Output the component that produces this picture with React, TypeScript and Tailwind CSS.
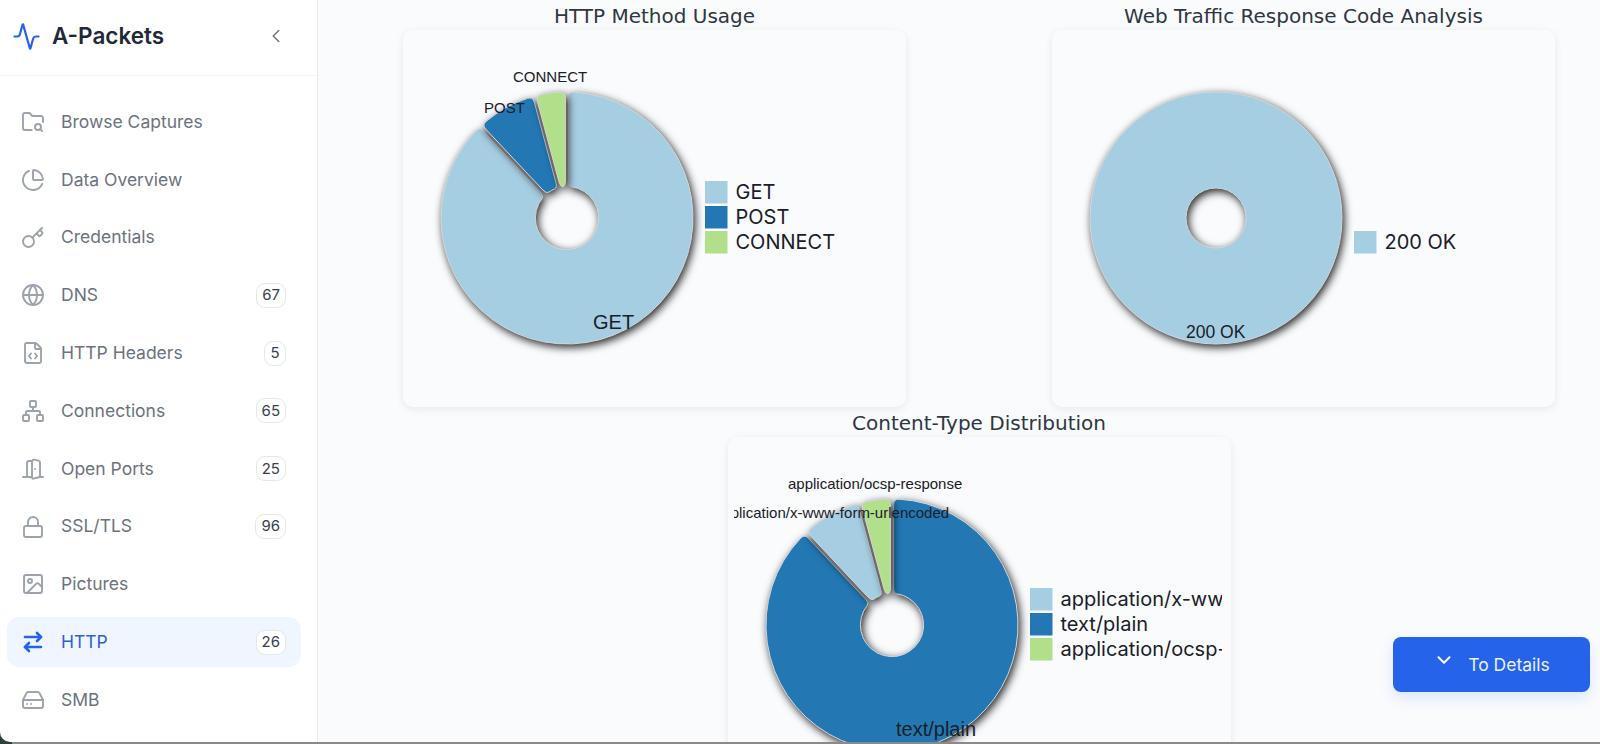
import { Activity, ArrowRightLeft, ChevronDown, ChevronLeft, DoorOpen, FileCode, FolderSearch, Globe, HardDrive, Image, Key, Lock, Network, PieChart } from "lucide-react";

const navItems = [
  { label: "Browse Captures", icon: FolderSearch },
  { label: "Data Overview", icon: PieChart },
  { label: "Credentials", icon: Key },
  { label: "DNS", icon: Globe, count: 67 },
  { label: "HTTP Headers", icon: FileCode, count: 5 },
  { label: "Connections", icon: Network, count: 65 },
  { label: "Open Ports", icon: DoorOpen, count: 25 },
  { label: "SSL/TLS", icon: Lock, count: 96 },
  { label: "Pictures", icon: Image },
  { label: "HTTP", icon: ArrowRightLeft, count: 26, active: true },
  { label: "SMB", icon: HardDrive },
];

const LIGHT = "#a6cee3";
const BLUE = "#2378b4";
const GREEN = "#b2df8a";

const CX = 158;
const CY = 188;
const R = 126;
const R0 = 30;

function pt(r: number, deg: number) {
  const a = (deg * Math.PI) / 180;
  return `${(CX + r * Math.sin(a)).toFixed(2)} ${(CY - r * Math.cos(a)).toFixed(2)}`;
}

// annular sector with rounded corners and a gap of constant width along its sides,
// angles clockwise from 12 o'clock
function sector(from: number, to: number, pad = 1.6, cr = 5.5) {
  const toDeg = 180 / Math.PI;
  const off = (r: number) => Math.asin(pad / r) * toDeg;
  const dO = (cr / R) * toDeg;
  const dI = (cr / R0) * toDeg * 0.5;
  const large = to - from > 180 ? 1 : 0;
  const rIn = R0 + pad;
  return [
    `M ${pt(R - cr, from + off(R - cr))}`,
    `Q ${pt(R, from + off(R))} ${pt(R, from + off(R) + dO)}`,
    `A ${R} ${R} 0 ${large} 1 ${pt(R, to - off(R) - dO)}`,
    `Q ${pt(R, to - off(R))} ${pt(R - cr, to - off(R - cr))}`,
    `L ${pt(rIn + cr, to - off(rIn + cr))}`,
    `Q ${pt(rIn, to - off(rIn))} ${pt(rIn, to - off(rIn) - dI)}`,
    `A ${rIn} ${rIn} 0 ${large} 0 ${pt(rIn, from + off(rIn) + dI)}`,
    `Q ${pt(rIn, from + off(rIn))} ${pt(rIn + cr, from + off(rIn + cr))}`,
    "Z",
  ].join(" ");
}

const ring = `M ${CX - R} ${CY} A ${R} ${R} 0 1 1 ${CX + R} ${CY} A ${R} ${R} 0 1 1 ${CX - R} ${CY} Z M ${CX - R0} ${CY} A ${R0} ${R0} 0 1 0 ${CX + R0} ${CY} A ${R0} ${R0} 0 1 0 ${CX - R0} ${CY} Z`;

interface Label {
  text: string;
  x: number;
  y: number;
  size: number;
}

interface ChartProps {
  slices: { d: string; fill: string }[];
  labels: Label[];
  legend: { name: string; fill: string }[];
}

function Chart({ slices, labels, legend }: ChartProps) {
  // legend rows are anchored to the bottom row
  const firstRow = 3 - legend.length;
  return (
    <svg width={488} height={377} viewBox="0 0 488 377" className="block overflow-hidden">
      {slices.map((s, i) => (
        <path
          key={i}
          d={s.d}
          fill={s.fill}
          fillRule="evenodd"
          stroke="#d4d6d8"
          strokeWidth={1}
          className="drop-shadow-[2px_3px_4px_rgba(0,0,0,0.85)]"
        />
      ))}
      {labels.map((l) => (
        <text key={l.text} x={l.x} y={l.y} fontSize={l.size} fontFamily="'Liberation Sans', Arial, sans-serif" fill="#1a2027">
          {l.text}
        </text>
      ))}
      {legend.map((item, i) => {
        const y = 151 + (i + firstRow) * 25;
        return (
          <g key={item.name}>
            <rect x={296} y={y} width={22.5} height={22.5} fill={item.fill} />
            <text x={326.5} y={y + 18} fontSize={20} fontFamily="Inter, sans-serif" fill="#1a2027">
              {item.name}
            </text>
          </g>
        );
      })}
    </svg>
  );
}

function ChartCard({ title, children, className = "" }: { title: string; children: React.ReactNode; className?: string }) {
  return (
    <div className={`w-[503px] ${className}`}>
      <h3 className="h-[20px] mb-[5px] -mx-10 pt-[1px] text-center text-[20px] leading-[20px] text-[#2f3742] font-['DejaVu_Sans',sans-serif]">
        {title}
      </h3>
      <div className="h-[377px] px-[6px] rounded-[10px] bg-[#fafbfd] shadow-[0_2px_8px_rgba(0,0,0,0.08)]">
        {children}
      </div>
    </div>
  );
}

export default function App() {
  return (
    <div className="relative h-[744px] w-[1600px] overflow-hidden bg-[#8a8a8a] font-['Inter',sans-serif]">
      <div className="absolute left-0 bottom-0 w-[12px] h-[12px] bg-[#2f3f3a]" />

      <div className="relative flex h-[742px]">
        {/* Sidebar */}
        <aside className="w-[318px] shrink-0 rounded-bl-[10px] bg-white border-r border-[#e9ebee]">
          <div className="h-[76px] pb-[3px] flex items-center pl-[12px] pr-[30px] border-b border-[#f2f3f5]">
            <Activity size={29} strokeWidth={1.8} className="text-[#2563eb] shrink-0" />
            <span className="ml-[11px] text-[22.5px] font-semibold text-[#1f2937]">A-Packets</span>
            <ChevronLeft size={22} strokeWidth={1.6} className="ml-auto text-[#6b7280]" />
          </div>
          <nav className="pt-[21px] pl-[7px] pr-[16px] flex flex-col gap-[7.8px]">
            {navItems.map((item) => {
              const Icon = item.icon;
              return (
                <div
                  key={item.label}
                  className={`h-[50px] flex items-center pl-[14px] pr-[15px] rounded-[12px] text-[17.5px] ${
                    item.active ? "bg-[#eff6ff] text-[#2f5fd8]" : "text-[#6b7280]"
                  }`}
                >
                  <Icon
                    size={24}
                    strokeWidth={item.active ? 2.6 : 1.9}
                    className={item.active ? "text-[#2563eb] shrink-0" : "text-[#9ca3af] shrink-0"}
                  />
                  <span className="ml-[16px]">{item.label}</span>
                  {item.count !== undefined && (
                    <span className="ml-auto h-[25px] min-w-[22px] px-[5px] flex items-center justify-center rounded-[9px] border border-[#e5e7eb] bg-white text-[15px] text-[#374151]">
                      {item.count}
                    </span>
                  )}
                </div>
              );
            })}
          </nav>
        </aside>

        {/* Main */}
        <main className="flex-1 overflow-hidden bg-[#fafbfd] pt-[5px] pl-[85px]">
          <div className="w-[1152px] grid grid-cols-[503px_503px] justify-between gap-y-[5px]">
            <ChartCard title="HTTP Method Usage">
              <Chart
                slices={[
                  { d: sector(0, 316.8), fill: LIGHT },
                  { d: sector(316.8, 345), fill: BLUE },
                  { d: sector(345, 360), fill: GREEN },
                ]}
                labels={[
                  { text: "CONNECT", x: 104, y: 52, size: 15 },
                  { text: "POST", x: 75, y: 83, size: 15 },
                  { text: "GET", x: 184, y: 299, size: 20 },
                ]}
                legend={[
                  { name: "GET", fill: LIGHT },
                  { name: "POST", fill: BLUE },
                  { name: "CONNECT", fill: GREEN },
                ]}
              />
            </ChartCard>
            <ChartCard title="Web Traffic Response Code Analysis">
              <Chart
                slices={[{ d: ring, fill: LIGHT }]}
                labels={[{ text: "200 OK", x: 128, y: 308, size: 17.5 }]}
                legend={[{ name: "200 OK", fill: LIGHT }]}
              />
            </ChartCard>
            <ChartCard title="Content-Type Distribution" className="col-span-2 justify-self-center">
              <Chart
                slices={[
                  { d: sector(0, 316.8), fill: BLUE },
                  { d: sector(316.8, 345), fill: LIGHT },
                  { d: sector(345, 360), fill: GREEN },
                ]}
                labels={[
                  { text: "application/ocsp-response", x: 54, y: 52, size: 15 },
                  { text: "application/x-www-form-urlencoded", x: -20, y: 81, size: 15 },
                  { text: "text/plain", x: 162, y: 299, size: 20 },
                ]}
                legend={[
                  { name: "application/x-www-form-urlencoded", fill: LIGHT },
                  { name: "text/plain", fill: BLUE },
                  { name: "application/ocsp-response", fill: GREEN },
                ]}
              />
            </ChartCard>
          </div>
        </main>
      </div>

      <button className="absolute left-[1393px] top-[637px] w-[197px] h-[55px] flex items-center justify-center gap-[13px] rounded-[8px] bg-[#2563eb] text-[17.5px] text-[#eaf1ff] shadow-[0_6px_14px_rgba(37,99,235,0.15)]">
        <ChevronDown size={22} strokeWidth={2.2} className="-mt-[9px] text-white" />
        <span className="pt-[1px]">To Details</span>
      </button>
    </div>
  );
}
